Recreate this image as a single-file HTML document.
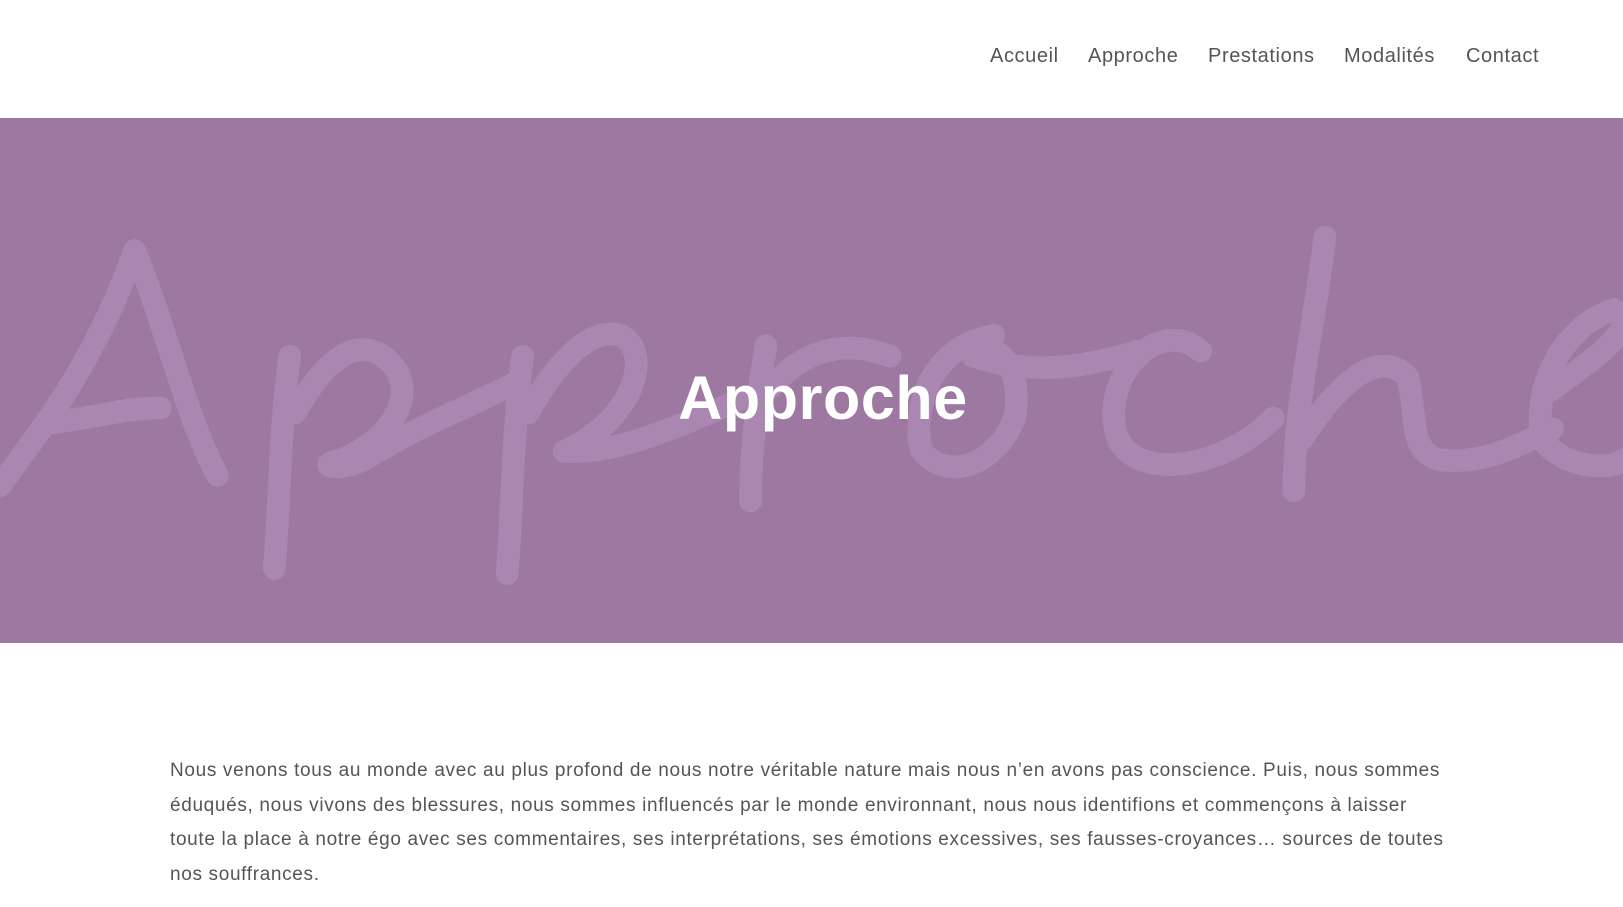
<!DOCTYPE html>
<html><head><meta charset="utf-8"><style>
html,body{margin:0;padding:0;width:1623px;height:907px;overflow:hidden;background:#fff;font-family:"Liberation Sans",sans-serif}
nav a{position:absolute;top:45px;font-size:20px;color:#555;text-decoration:none;letter-spacing:0.6px;white-space:nowrap}
.band{position:absolute;left:0;top:118px;width:1623px;height:525px;background:#9d78a0;overflow:hidden}
.band svg{position:absolute;left:0;top:0}
h1{position:absolute;left:0;width:1646px;text-align:center;top:363px;margin:0;font-size:61px;font-weight:bold;color:#fff;letter-spacing:0.6px}
.p{position:absolute;left:170px;top:754px;font-size:19px;line-height:34.5px;color:#555;letter-spacing:0.66px}
.p div{white-space:nowrap}
</style></head><body>
<nav><a style="left:990px">Accueil</a><a style="left:1088px">Approche</a><a style="left:1208px">Prestations</a><a style="left:1344px">Modalités</a><a style="left:1466px">Contact</a></nav>
<div class="band">
<svg width="1623" height="525" viewBox="0 0 1568 507" preserveAspectRatio="none" fill="none" stroke="#aa87b0" stroke-width="22" stroke-linecap="round" stroke-linejoin="round">
<path d="M0 355 C40 300 90 240 130 128 C160 200 180 290 210 345"/>
<path d="M45 295 C90 290 120 280 155 280"/>
<path d="M280 230 C270 300 270 380 265 435"/>
<path d="M285 285 C310 240 340 210 370 230 C410 260 380 310 330 330 C300 335 330 345 360 325 C400 300 450 280 500 255"/>
<path d="M505 230 C495 300 495 380 490 440"/>
<path d="M510 285 C535 240 570 200 600 210 C630 225 615 290 545 322 C600 325 660 295 720 270"/>
<path d="M740 220 C730 280 725 330 725 370"/>
<path d="M745 260 C780 220 820 215 860 230"/>
<path d="M960 210 C900 220 880 280 890 320 C910 350 960 340 980 290 C990 240 960 210 940 230 C1000 250 1050 240 1100 225"/>
<path d="M1160 225 C1120 190 1060 250 1080 310 C1100 350 1180 340 1230 290"/>
<path d="M1280 115 C1270 200 1250 280 1250 360"/>
<path d="M1258 310 C1290 260 1330 220 1360 250 C1370 290 1360 320 1390 330 C1430 335 1460 320 1500 300"/>
<path d="M1560 185 C1510 200 1480 260 1490 310 C1510 340 1560 340 1568 330"/>
<path d="M1495 265 C1530 240 1560 220 1568 200"/>
</svg>
</div>
<h1>Approche</h1>
<div class="p">
<div>Nous venons tous au monde avec au plus profond de nous notre véritable nature mais nous n’en avons pas conscience. Puis, nous sommes</div>
<div>éduqués, nous vivons des blessures, nous sommes influencés par le monde environnant, nous nous identifions et commençons à laisser</div>
<div>toute la place à notre égo avec ses commentaires, ses interprétations, ses émotions excessives, ses fausses-croyances… sources de toutes</div>
<div>nos souffrances.</div>
</div>
</body></html>
